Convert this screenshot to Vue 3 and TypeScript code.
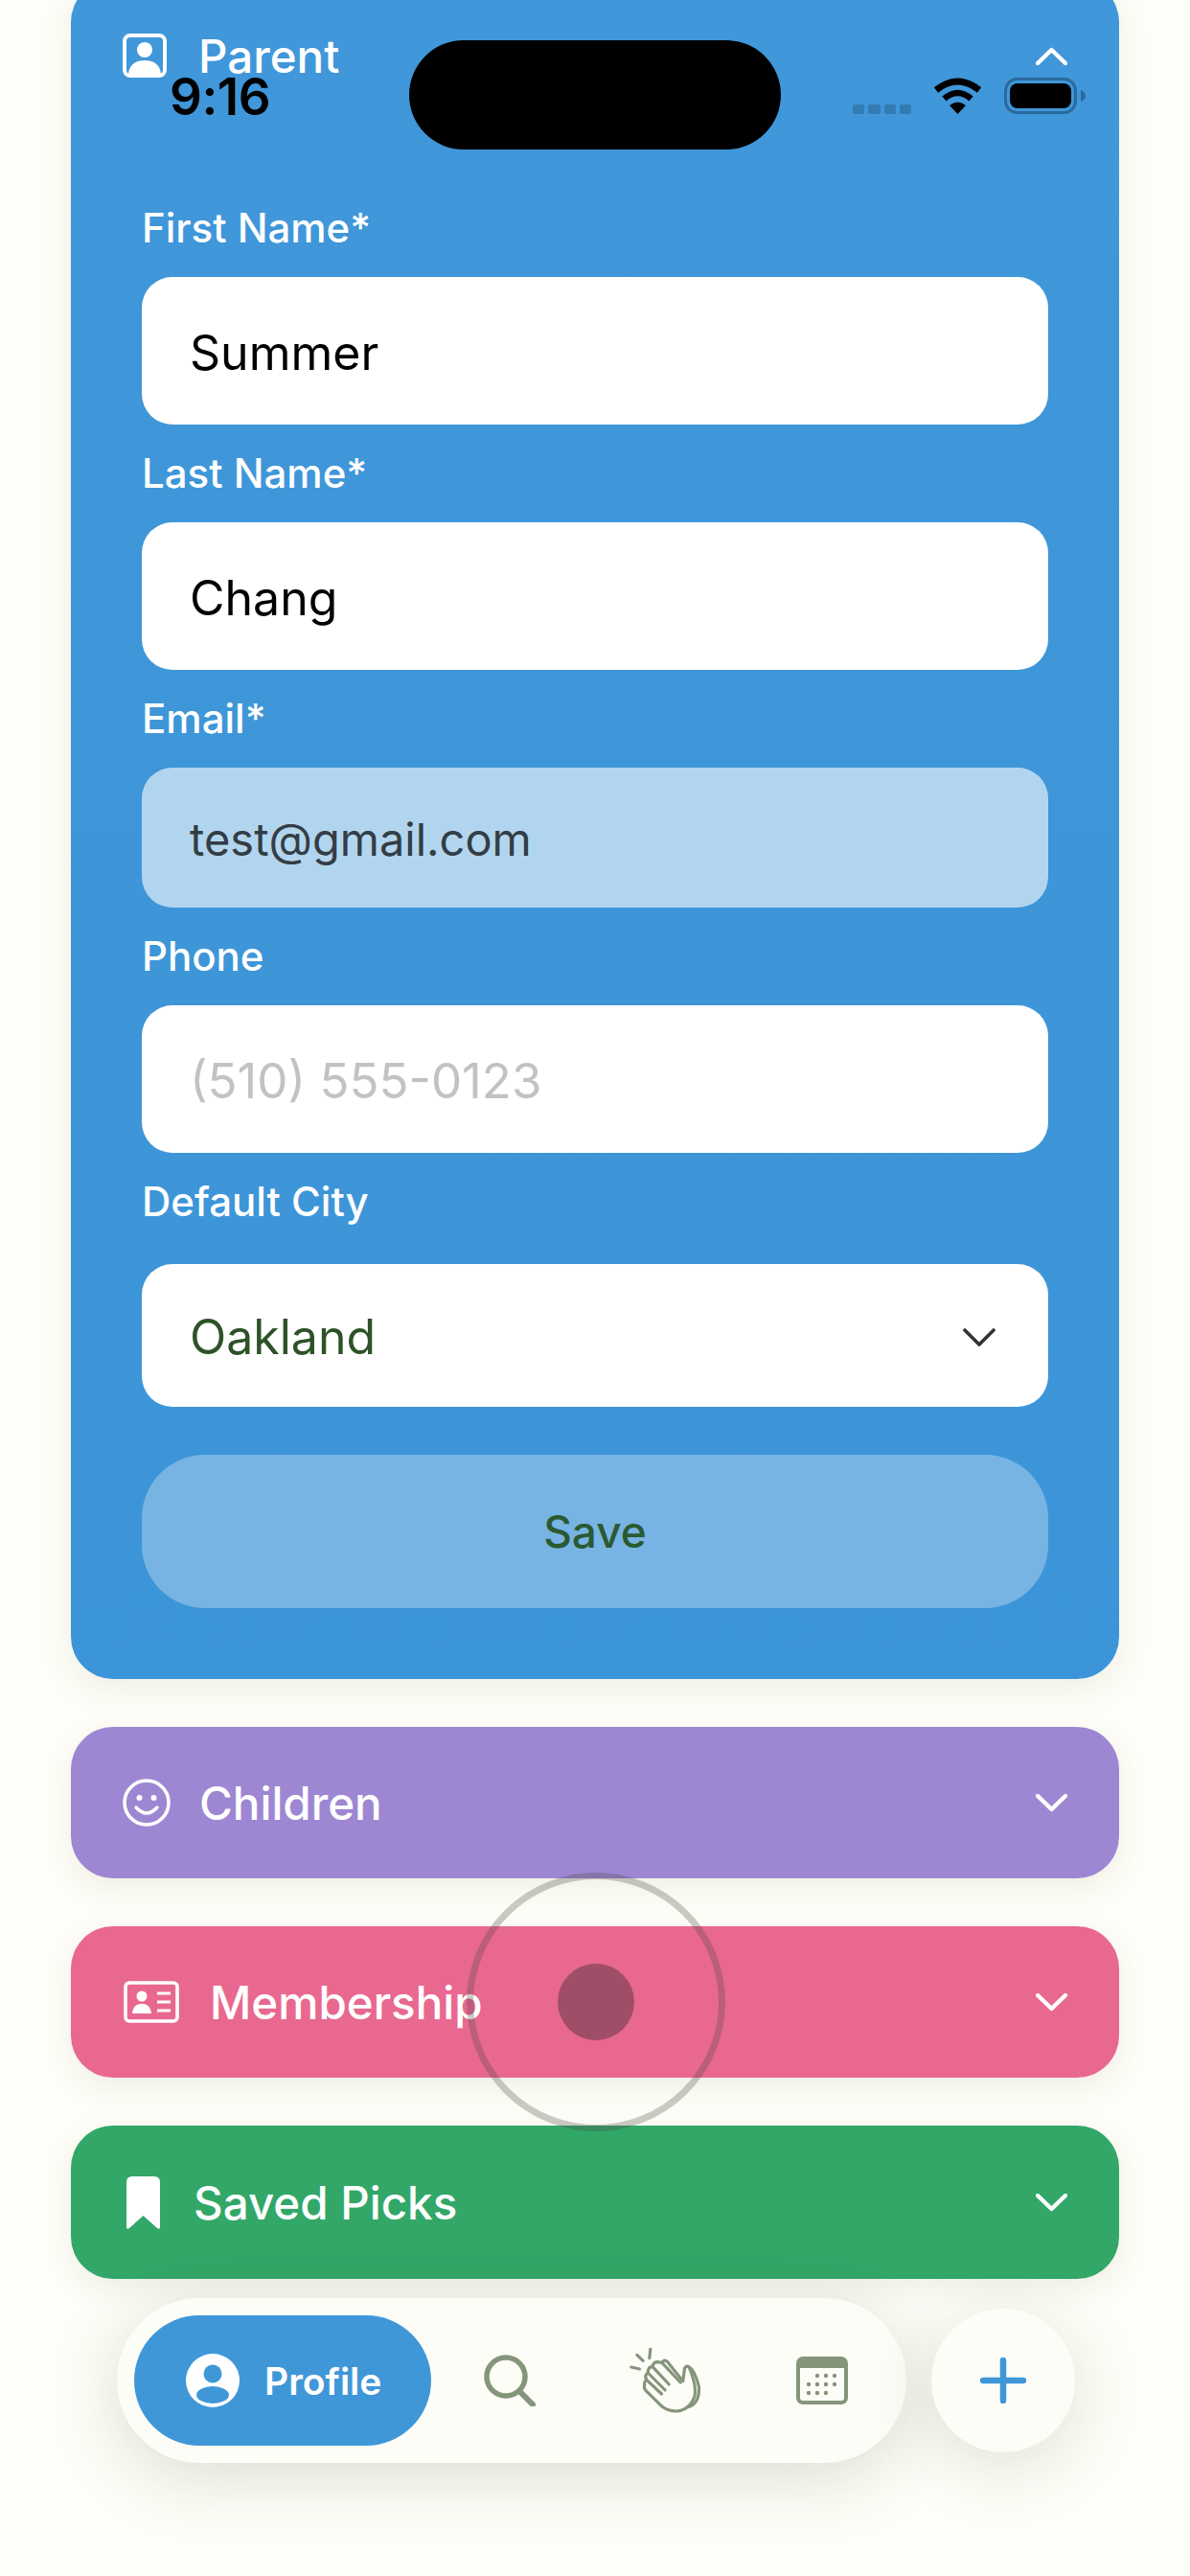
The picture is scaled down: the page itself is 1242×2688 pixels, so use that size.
<script setup lang="ts">
interface Field { label: string; value: string; kind: string }
const fields: Field[] = [
  { label: 'First Name*', value: 'Summer', kind: 'text' },
  { label: 'Last Name*', value: 'Chang', kind: 'text' },
  { label: 'Email*', value: 'test@gmail.com', kind: 'disabled' },
  { label: 'Phone', value: '(510) 555-0123', kind: 'placeholder' },
]
</script>

<template>
  <div class="screen">
    <section class="card">
      <header class="card-head">
        <svg class="ico-parent" viewBox="0 0 46 46">
          <rect x="2" y="2" width="42" height="42" rx="6" fill="none" stroke="#fff" stroke-width="4" />
          <circle cx="23" cy="17" r="8" fill="#fff" />
          <path d="M6 42 C7 32 14 28 23 28 C32 28 39 32 40 42 Z" fill="#fff" />
        </svg>
        <span class="head-title parent-title">Parent</span>
        <svg class="chev up" viewBox="0 0 33 19"><path d="M2 17 L16.5 3 L31 17" /></svg>
      </header>
      <div class="form">
        <div v-for="f in fields" :key="f.label" class="field">
          <label class="lbl">{{ f.label }}</label>
          <div class="control" :class="f.kind">{{ f.value }}</div>
        </div>
        <div class="field">
          <label class="lbl city">Default City</label>
          <div class="control select">
            <span>Oakland</span>
            <svg class="sel-chev" viewBox="0 0 34 20"><path d="M2 3 L17 18 L32 3" /></svg>
          </div>
        </div>
        <button class="save">Save</button>
      </div>
    </section>

    <section class="row purple">
      <svg class="ico-smile" viewBox="0 0 50 50">
        <circle cx="25" cy="25" r="23" fill="none" stroke="#fff" stroke-width="3.6" />
        <circle cx="17.5" cy="20" r="3" fill="#fff" />
        <circle cx="32.5" cy="20" r="3" fill="#fff" />
        <path d="M14 30 Q25 42 36 30" fill="none" stroke="#fff" stroke-width="3.4" stroke-linecap="round" />
      </svg>
      <span class="head-title">Children</span>
      <svg class="chev" viewBox="0 0 33 19"><path d="M2 2 L16.5 16 L31 2" /></svg>
    </section>

    <section class="row pink">
      <svg class="ico-card" viewBox="0 0 58 44">
        <rect x="2" y="2" width="54" height="40" rx="4" fill="none" stroke="#fff" stroke-width="3.6" />
        <circle cx="19" cy="16" r="5.5" fill="#fff" />
        <path d="M9 34 C10 26 14 24 19 24 C24 24 28 26 29 34 Z" fill="#fff" />
        <path d="M35 13 H49 M35 22 H49 M35 31 H49" stroke="#fff" stroke-width="3" fill="none" />
      </svg>
      <span class="head-title member-title">Membership</span>
      <svg class="chev" viewBox="0 0 33 19"><path d="M2 2 L16.5 16 L31 2" /></svg>
    </section>

    <section class="row green">
      <svg class="ico-bookmark" viewBox="0 0 35 55">
        <path d="M0 6 Q0 0 6 0 H29 Q35 0 35 6 V53 Q35 56 32 54 L17.5 41 L3 54 Q0 56 0 53 Z" fill="#fff" />
      </svg>
      <span class="head-title saved-title">Saved Picks</span>
      <svg class="chev" viewBox="0 0 33 19"><path d="M2 2 L16.5 16 L31 2" /></svg>
    </section>

    <div class="status">
      <span class="time">9:16</span>
      <div class="island"></div>
      <div class="signal"><i></i><i></i><i></i><i></i></div>
      <svg class="wifi" viewBox="0 0 51 38">
        <path d="M3 13 Q25.5 -5 48 13" fill="none" stroke="#000" stroke-width="7" />
        <path d="M11.5 22 Q25.5 10 39.5 22" fill="none" stroke="#000" stroke-width="6.5" />
        <path d="M17 29 Q25.5 22 34 29 L25.5 38 Z" fill="#000" />
      </svg>
      <svg class="battery" viewBox="0 0 85 38">
        <rect x="1.5" y="1.5" width="73" height="35" rx="12" fill="none" stroke="#2a6a9e" stroke-width="3" />
        <rect x="6" y="6" width="64" height="26" rx="8" fill="#000" />
        <path d="M80 13 Q85 15 85 19 Q85 23 80 25 Z" fill="#2a6a9e" />
      </svg>
    </div>

    <div class="touch"><div class="touch-dot"></div></div>

    <nav class="nav">
      <div class="bar">
        <div class="pill">
          <svg class="ico-profile" viewBox="0 0 56 56">
            <circle cx="28" cy="28" r="28" fill="#fff" />
            <circle cx="28" cy="21" r="9.5" fill="#3f97d8" />
            <ellipse cx="28" cy="43" rx="17" ry="9" fill="#3f97d8" />
          </svg>
          <span class="pill-label">Profile</span>
        </div>
        <div class="slot">
          <svg class="ico-search" viewBox="0 0 54 54">
            <circle cx="23" cy="23" r="20" fill="none" stroke="#85957b" stroke-width="5.5" />
            <path d="M37 38 L51 52" stroke="#85957b" stroke-width="6" stroke-linecap="round" />
          </svg>
        </div>
        <div class="slot">
          <svg class="ico-clap" viewBox="110 115 230 210" fill="none" stroke="#85957b" stroke-width="9.5" stroke-linecap="round" stroke-linejoin="round">
            <path d="M118 178 L144 184 M136 140 L155 158 M178 122 L175 150" />
            <path d="M160 235 Q155 245 170 258 L215 302 Q240 320 270 315 Q305 305 316 270 Q324 240 300 180 Q292 170 285 182 L280 222 L232 162 Q222 152 214 164 L200 162 Q188 162 184 176 Q170 178 170 196 Q158 204 166 218 Q156 226 160 235 Z" />
            <path d="M184 176 L236 232 M170 196 L224 250 M166 218 L213 262" />
            <path d="M300 178 Q318 190 330 240 Q332 290 300 302 M214 164 L272 226" />
          </svg>
        </div>
        <div class="slot">
          <svg class="ico-cal" viewBox="0 0 54 50">
            <rect x="2" y="2" width="50" height="46" rx="5" fill="none" stroke="#85957b" stroke-width="4" />
            <path d="M2 12 V7 Q2 2 7 2 H47 Q52 2 52 7 V12 Z" fill="#85957b" />
            <g fill="#85957b">
              <circle cx="22" cy="20" r="2.2" /><circle cx="31" cy="20" r="2.2" /><circle cx="40" cy="20" r="2.2" />
              <circle cx="13" cy="29" r="2.2" /><circle cx="22" cy="29" r="2.2" /><circle cx="31" cy="29" r="2.2" /><circle cx="40" cy="29" r="2.2" />
              <circle cx="13" cy="38" r="2.2" /><circle cx="22" cy="38" r="2.2" /><circle cx="31" cy="38" r="2.2" />
            </g>
          </svg>
        </div>
      </div>
      <button class="plus">
        <svg viewBox="0 0 48 48" class="ico-plus"><path d="M24 3 V45 M3 24 H45" stroke="#3f97d8" stroke-width="6.5" stroke-linecap="round" /></svg>
      </button>
    </nav>
  </div>
</template>

<style scoped>
.screen {
  position: relative;
  box-sizing: border-box;
  width: 1242px;
  height: 2688px;
  overflow: hidden;
  padding: 0 74px;
  background: #fefdf7;
  font-family: Inter, "Liberation Sans", sans-serif;
  color: #fff;
  display: flex;
  flex-direction: column;
}
.card {
  flex: none;
  margin-top: -21px;
  border-radius: 44px;
  background: linear-gradient(#4097d9, #3c95d8);
  box-shadow: 0 10px 34px rgba(60, 60, 40, 0.08);
}
.card-head,
.row {
  display: flex;
  align-items: center;
  height: 158px;
  padding: 0 54px;
}
.head-title {
  font-size: 47.5px;
  font-weight: 500;
  margin-left: 30px;
}
.parent-title { margin-left: 33px; }
.member-title { margin-left: 32px; }
.saved-title { margin-left: 35px; }
.chev {
  width: 33px;
  height: 19px;
  margin-left: auto;
  fill: none;
  stroke: #fff;
  stroke-width: 4.4;
  stroke-linecap: round;
  stroke-linejoin: round;
}
.ico-parent { width: 46px; height: 46px; }
.form {
  padding: 76px 74px 74px;
  display: flex;
  flex-direction: column;
}
.field { margin-bottom: 26px; }
.lbl {
  display: block;
  font-size: 42px;
  font-weight: 500;
  line-height: 50px;
  margin-bottom: 26px;
}
.lbl.city { margin-bottom: 40px; }
.control {
  box-sizing: border-box;
  height: 154px;
  display: flex;
  align-items: center;
  padding: 3px 50px 0;
  border-radius: 32px;
  background: #fff;
  color: #000;
  font-size: 50px;
}
.control.disabled {
  height: 146px;
  background: #b2d5ef;
  color: #333d45;
  font-size: 47px;
}
.control.placeholder { color: #c2c2c2; font-size: 51px; }
.control.select {
  height: 149px;
  justify-content: space-between;
  color: #2d5227;
  padding-right: 55px;
}
.sel-chev {
  width: 34px;
  height: 20px;
  fill: none;
  stroke: #333;
  stroke-width: 3.6;
  stroke-linecap: round;
  stroke-linejoin: round;
}
.save {
  margin-top: 24px;
  height: 160px;
  border: 0;
  border-radius: 66px;
  background: #77b4e3;
  color: #2b5a32;
  font-family: inherit;
  font-size: 46px;
  font-weight: 500;
}
.row {
  flex: none;
  border-radius: 44px;
  box-shadow: 0 10px 30px rgba(60, 60, 40, 0.08);
}
.purple { margin-top: 50px; background: #9d87d2; }
.pink { margin-top: 50px; background: #e96890; }
.green { margin-top: 50px; height: 160px; background: #32a768; }
.ico-smile { width: 50px; height: 50px; }
.ico-card { width: 58px; height: 44px; margin-left: 1px; }
.ico-bookmark { width: 35px; height: 55px; margin-left: 4px; }

.status {
  position: absolute;
  top: 0;
  left: 177px;
  display: flex;
  align-items: flex-start;
  color: #000;
}
.time {
  width: 103px;
  margin-top: 71px;
  font-size: 53px;
  font-weight: 600;
  line-height: 60px;
  letter-spacing: -0.5px;
  white-space: nowrap;
}
.island {
  width: 388px;
  height: 114px;
  margin: 42px 75px 0 147px;
  border-radius: 57px;
  background: #000;
}
.signal {
  display: flex;
  gap: 4px;
  margin-top: 109px;
  margin-right: 23px;
}
.signal i {
  width: 12.25px;
  height: 10px;
  border-radius: 2px;
  background: #327bb3;
}
.wifi { width: 51px; height: 38px; margin-top: 81px; margin-right: 23px; }
.battery { width: 85px; height: 38px; margin-top: 81px; }

.touch {
  position: absolute;
  left: 487px;
  top: 1954px;
  box-sizing: border-box;
  width: 270px;
  height: 270px;
  border: 7px solid rgba(70, 70, 60, 0.28);
  border-radius: 50%;
  display: flex;
  align-items: center;
  justify-content: center;
}
.touch-dot {
  width: 80px;
  height: 80px;
  margin-left: -1px;
  border-radius: 50%;
  background: rgba(60, 40, 50, 0.42);
}

.nav {
  position: absolute;
  left: 122px;
  top: 2398px;
  display: flex;
  align-items: center;
  gap: 26px;
}
.bar {
  box-sizing: border-box;
  width: 824px;
  height: 172px;
  padding: 18px 6px 18px 20px;
  display: flex;
  align-items: center;
  border-radius: 86px;
  background: #fdfdf7;
  box-shadow: 0 14px 70px rgba(60, 60, 40, 0.17);
}
.pill {
  flex: none;
  box-sizing: border-box;
  width: 310px;
  height: 136px;
  margin-left: -2px;
  padding-left: 54px;
  display: flex;
  align-items: center;
  gap: 26px;
  border-radius: 68px;
  background: #3f97d8;
}
.pill-label { font-size: 39px; font-weight: 600; }
.ico-profile { width: 56px; height: 56px; }
.slot {
  flex: 1;
  display: flex;
  justify-content: center;
  align-items: center;
}
.ico-search { width: 54px; height: 54px; }
.ico-clap { width: 77px; height: 70px; }
.ico-cal { width: 54px; height: 50px; }
.plus {
  width: 150px;
  height: 150px;
  padding: 0;
  border: 0;
  border-radius: 50%;
  background: #fdfdf7;
  box-shadow: 0 14px 70px rgba(60, 60, 40, 0.15);
  display: flex;
  align-items: center;
  justify-content: center;
}
.ico-plus { width: 48px; height: 48px; }
</style>

<style>
html, body { background: #fefdf7; }
</style>
